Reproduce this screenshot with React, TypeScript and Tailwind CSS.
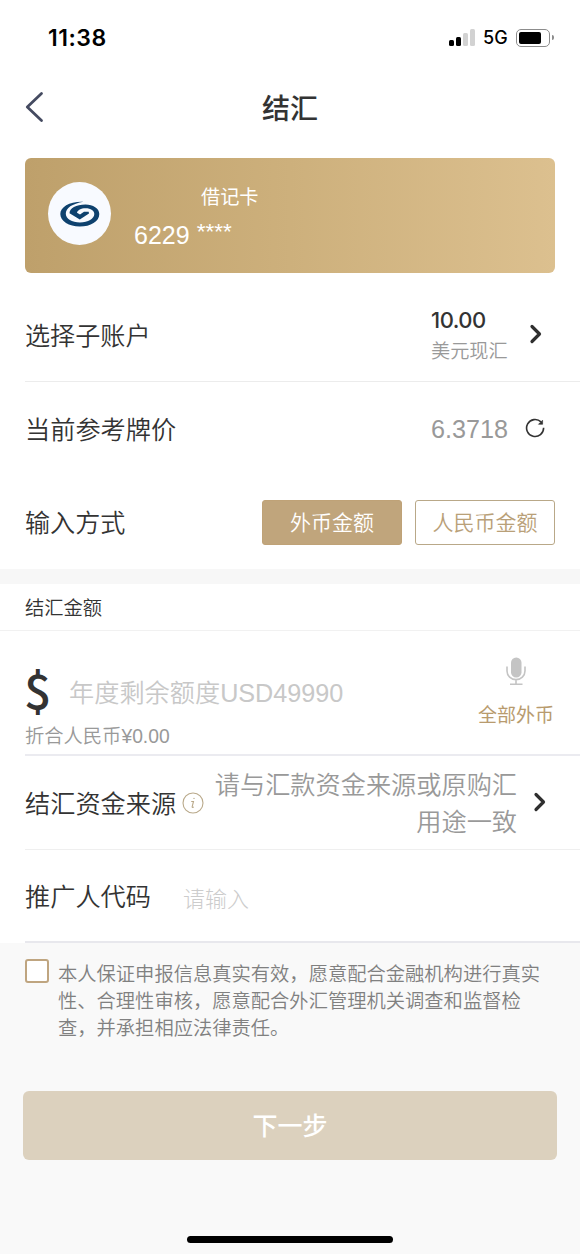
import React, { useState } from 'react';

const BackIcon = () => (
  <svg className="h-8 w-5" viewBox="0 0 20 32" fill="none" stroke="#454b61" strokeWidth="2.8" strokeLinecap="round" strokeLinejoin="round">
    <path d="M16.500 2.500 2.300 16 16.500 29.500" />
  </svg>
);

const ChevronIcon = () => (
  <svg className="h-5 w-3.5" viewBox="0 0 14 20" fill="none" stroke="#2f2f2f" strokeWidth="3.2" strokeLinecap="round" strokeLinejoin="round">
    <path d="M3 2.500 10.500 10 3 17.500" />
  </svg>
);

const RefreshIcon = () => (
  <svg className="h-5 w-5" viewBox="0 0 20 20" fill="none" stroke="#333" strokeWidth="1.6">
    <path d="M18.600 9.800A8.500 8.500 0 1 1 16 3.900" />
    <path d="M17.600 2.200v4.100h-4.100z" fill="#333" strokeWidth="0.6" />
  </svg>
);

const MicIcon = () => (
  <svg className="h-[29px] w-5" viewBox="0 0 20 29" fill="none" stroke="#c4c4c4" strokeWidth="1.6">
    <rect x="5" y="0.5" width="10.500" height="20" rx="5.2" fill="#c4c4c4" stroke="none" />
    <path d="M1 9.500v4.500a9 8.600 0 0 0 18 0V9.500M10 22.600v4M4 27.200h12.500" />
  </svg>
);

const InfoIcon = () => (
  <svg className="h-[22px] w-[22px]" viewBox="0 0 22 22" fill="none" stroke="#b9a98a" strokeWidth="1.1">
    <circle cx="11" cy="11" r="10" />
    <path d="M9.200 9.500h2.300l-1.300 5.200c-.2.9.6 1 1.600.2" />
    <circle cx="12" cy="6.400" r="0.7" fill="#b9a98a" stroke="none" />
  </svg>
);

const BankLogo = () => (
  <svg className="h-[26px] w-10" viewBox="0 0 40 26">
    <path
      d="M23.500 .8C10 .2 .3 6 .3 13C.3 20 9 25.600 19.800 25.600S39.300 20.500 39.300 13C39.300 7.500 33 3.600 25.500 3.600C16 3.600 9.500 7.500 9.500 12.200L19.800 18.600L29 12.500L28.700 10.700L24 10.700L20 13.400L17 11.800C17.500 9 21 7.200 25.500 7.200C31 7.200 34.300 9.700 34.300 13C34.300 17.800 28 21.400 20 21.400S5.800 17.800 5.800 12.800C5.800 7 12 2.800 23.500 .8Z"
      fill="#0e416e"
    />
  </svg>
);

const StatusBar = () => (
  <div className="flex h-[75px] items-center justify-between pr-[26px] pl-12 font-['Inter'] text-black">
    <span className="pt-px text-[23px] font-semibold tracking-[0.5px]">11:38</span>
    <div className="flex items-center">
      <div className="flex h-[17px] items-end gap-[2px]">
        <span className="h-[6px] w-[5px] rounded-[1.5px] bg-black" />
        <span className="h-[9px] w-[5px] rounded-[1.5px] bg-black" />
        <span className="h-[13px] w-[5px] rounded-[1.5px] bg-[#d2d2d2]" />
        <span className="h-[17px] w-[5px] rounded-[1.5px] bg-[#d2d2d2]" />
      </div>
      <span className="ml-2 w-[25px] text-[18px] font-medium">5G</span>
      <div className="ml-2 h-[18px] w-[34px] rounded-[5px] border border-[#8c8c8c] p-[2px]">
        <div className="h-full w-[22px] rounded-[2px] bg-black" />
      </div>
      <span className="ml-[2px] h-[5px] w-[2px] rounded-r-full bg-[#8c8c8c]" />
    </div>
  </div>
);

const App: React.FC = () => {
  const [mode, setMode] = useState<'foreign' | 'rmb'>('foreign');
  const [agreed, setAgreed] = useState(false);

  const modeClass = (active: boolean) =>
    `h-[45px] w-[140px] rounded-[3px] border text-[21px] font-[350] ${active ? 'border-[#bfa277] bg-[#c0a57c] text-white' : 'border-[#b9a888] bg-white text-[#b9a078]'}`;

  return (
    <div className="flex h-[1254px] w-[580px] flex-col overflow-hidden bg-[#f9f9f9] font-['Liberation_Sans','Noto_Sans_CJK_SC',sans-serif] text-[#333]">
      <div className="bg-white">
        <StatusBar />
        <header className="grid h-[83px] grid-cols-3 items-start px-[25px] pt-4">
          <button className="w-5"><BackIcon /></button>
          <h1 className="pt-[3px] text-center text-[28px] leading-8 font-medium">结汇</h1>
        </header>

        <div className="mx-[25px] flex h-[115px] rounded-[6px] bg-linear-to-r from-[#bea06b] via-[#cdb07c] to-[#dcc08f] pt-6 pl-[23px] text-white">
          <div className="flex h-[63px] w-[63px] items-center justify-center rounded-full bg-[#f8faff]">
            <BankLogo />
          </div>
          <div className="ml-[23px]">
            <p className="pt-[2px] pl-[67px] text-[19.2px] leading-7">借记卡</p>
            <p className="mt-[7px] flex text-[25px] leading-8">6229<span className="-mt-[3px] ml-[7px] text-[22.5px]">****</span></p>
          </div>
        </div>

        <div className="ml-[25px] flex h-[109px] items-center border-b border-[#ececec] pt-[18px] pr-[37px]">
          <span className="flex-1 pt-[2px] text-[25.1px] font-[350]">选择子账户</span>
          <div className="w-[78px] whitespace-nowrap">
            <p className="font-['Inter'] text-[22px] leading-7 font-medium tracking-[-0.5px]">10.00</p>
            <p className="mt-[4px] text-[19.2px] leading-7 font-[350] text-[#999]">美元现汇</p>
          </div>
          <span className="-mt-[4px] ml-5"><ChevronIcon /></span>
        </div>

        <div className="ml-[25px] flex h-[94px] items-center pr-[35px]">
          <span className="flex-1 pt-[3px] text-[25.2px] font-[350]">当前参考牌价</span>
          <span className="pt-[2px] text-[25.2px] text-[#999]">6.3718</span>
          <button className="-mt-[3px] ml-[17px]"><RefreshIcon /></button>
        </div>

        <div className="flex h-[93px] items-center gap-[13px] px-[25px]">
          <span className="flex-1 pt-[2px] text-[25.1px] font-[350]">输入方式</span>
          <button className={modeClass(mode === 'foreign')} onClick={() => setMode('foreign')}>外币金额</button>
          <button className={modeClass(mode === 'rmb')} onClick={() => setMode('rmb')}>人民币金额</button>
        </div>

        <div className="h-[15px] bg-[#f7f7f7]" />

        <h2 className="flex h-[47px] items-center border-b border-[#f1f1f1] px-[25px] pt-[4px] text-[19.3px] font-[350]">结汇金额</h2>

        <div className="ml-[25px] flex h-[125px] justify-between border-b-2 border-[#ebebf0] pr-[26px]">
          <div className="pt-[33px]">
            <div className="flex h-[60px] items-center">
              <span className="-mt-[12px] -ml-[1px] w-[45px] font-['Noto_Sans_CJK_SC'] text-[48px] leading-[60px] font-medium">$</span>
              <span className="text-[25.2px] font-[350] text-[#c8c8c8]">年度剩余额度USD49990</span>
            </div>
            <p className="text-[19.3px] leading-[26px] font-[350] text-[#999]">折合人民币¥0.00</p>
          </div>
          <div className="flex flex-col items-center pt-[26px]">
            <MicIcon />
            <button className="mt-[16px] text-[19px] leading-7 text-[#b89b6e]">全部外币</button>
          </div>
        </div>

        <div className="ml-[25px] flex h-[94px] items-center border-b border-[#efefef] pr-[33px]">
          <span className="pt-[4px] text-[25.2px] font-[350]">结汇资金来源</span>
          <span className="ml-[6px] pt-[1px]"><InfoIcon /></span>
          <p className="ml-2 flex-1 pt-[3px] text-right text-[25.2px] leading-[37px] font-[350] text-[#999]">请与汇款资金来源或原购汇用途一致</p>
          <span className="-mt-[2px] ml-4"><ChevronIcon /></span>
        </div>

        <div className="ml-[25px] flex h-[93px] items-center border-b-2 border-[#e8e8ed]">
          <span className="pt-[5px] text-[25.2px] font-[350]">推广人代码</span>
          <span className="ml-8 pt-[7px] text-[22px] font-light text-[#ccc]">请输入</span>
        </div>
      </div>

      <div className="flex px-[25px] pt-[18px]">
        <button
          onClick={() => setAgreed(!agreed)}
          className={`-mt-[2px] h-6 w-6 shrink-0 rounded-[3px] border-[2.5px] border-[#bfa580] ${agreed ? 'bg-[#bfa580]' : 'bg-white'}`}
        />
        <p className="ml-[9px] w-[488px] text-[19.3px] leading-[27px] font-[350] text-[#808080]">
          本人保证申报信息真实有效，愿意配合金融机构进行真实性、合理性审核，愿意配合外汇管理机关调查和监督检查，并承担相应法律责任。
        </p>
      </div>

      <button className="mx-[23px] mt-[49px] h-[69px] rounded-[6px] bg-[#dcd1be] pt-[2px] text-[25px] font-medium text-white">下一步</button>

      <div className="mt-auto mb-[11px] h-[7px] w-[206px] self-center rounded-full bg-black" />
    </div>
  );
};

export default App;
